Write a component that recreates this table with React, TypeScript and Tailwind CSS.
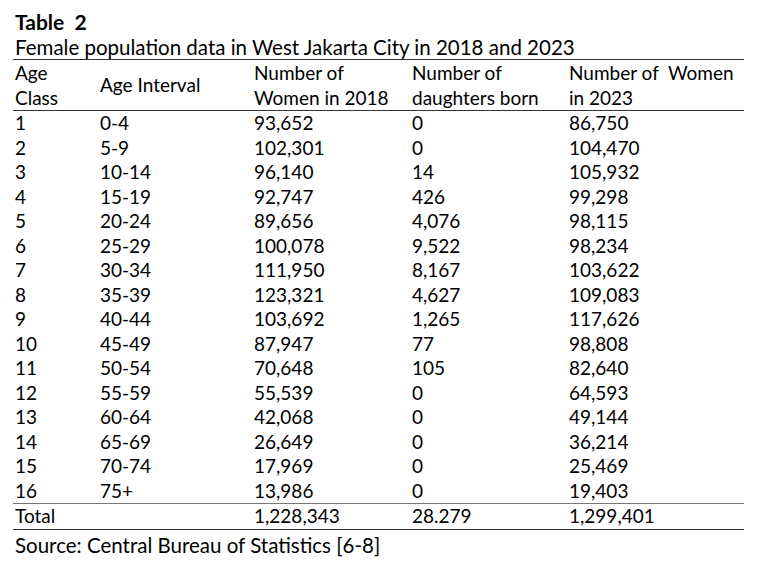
const rows = [
  ["1", "0-4", "93,652", "0", "86,750"],
  ["2", "5-9", "102,301", "0", "104,470"],
  ["3", "10-14", "96,140", "14", "105,932"],
  ["4", "15-19", "92,747", "426", "99,298"],
  ["5", "20-24", "89,656", "4,076", "98,115"],
  ["6", "25-29", "100,078", "9,522", "98,234"],
  ["7", "30-34", "111,950", "8,167", "103,622"],
  ["8", "35-39", "123,321", "4,627", "109,083"],
  ["9", "40-44", "103,692", "1,265", "117,626"],
  ["10", "45-49", "87,947", "77", "98,808"],
  ["11", "50-54", "70,648", "105", "82,640"],
  ["12", "55-59", "55,539", "0", "64,593"],
  ["13", "60-64", "42,068", "0", "49,144"],
  ["14", "65-69", "26,649", "0", "36,214"],
  ["15", "70-74", "17,969", "0", "25,469"],
  ["16", "75+", "13,986", "0", "19,403"],
]

export default function App() {
  return (
    <div className="w-[782px] h-[582px] bg-white text-black font-['Lato','Liberation_Sans',sans-serif] text-[19px] leading-[24.5px] pt-[9px] pl-[13px]">
      <div className="font-bold pl-[2px] text-[21px] leading-[26px]">Table&nbsp; 2</div>
      <div className="pl-[2px] text-[20.5px] leading-[24px]">Female population data in West Jakarta City in 2018 and 2023</div>
      <table className="w-[731px] border-collapse table-fixed">
        <colgroup>
          <col className="w-[87px]" />
          <col className="w-[154px]" />
          <col className="w-[158px]" />
          <col className="w-[157px]" />
          <col className="w-[175px]" />
        </colgroup>
        <thead>
          <tr className="border-t border-b border-[#333]">
            <th className="font-normal text-left align-top pl-[2px] pt-[1px]">Age<br />Class</th>
            <th className="font-normal text-left align-middle">Age Interval</th>
            <th className="font-normal text-left align-top pt-[1px]">Number of<br />Women in 2018</th>
            <th className="font-normal text-left align-top pt-[1px]">Number of<br />daughters born</th>
            <th className="font-normal text-left align-top pt-[1px] whitespace-pre">Number of  Women<br />in 2023</th>
          </tr>
        </thead>
        <tbody>
          {rows.map((r, i) => (
            <tr key={r[0]} className={i === rows.length - 1 ? "border-b border-[#777]" : ""}>
              <td className="pl-[2px]">{r[0]}</td>
              <td>{r[1]}</td>
              <td>{r[2]}</td>
              <td>{r[3]}</td>
              <td>{r[4]}</td>
            </tr>
          ))}
          <tr className="border-b border-[#333]">
            <td className="pl-[2px]">Total</td>
            <td></td>
            <td>1,228,343</td>
            <td>28.279</td>
            <td>1,299,401</td>
          </tr>
        </tbody>
      </table>
      <div className="pl-[2px] pt-[3px] text-[20.5px] leading-[24px]">Source: Central Bureau of Statistics [6-8]</div>
    </div>
  )
}
